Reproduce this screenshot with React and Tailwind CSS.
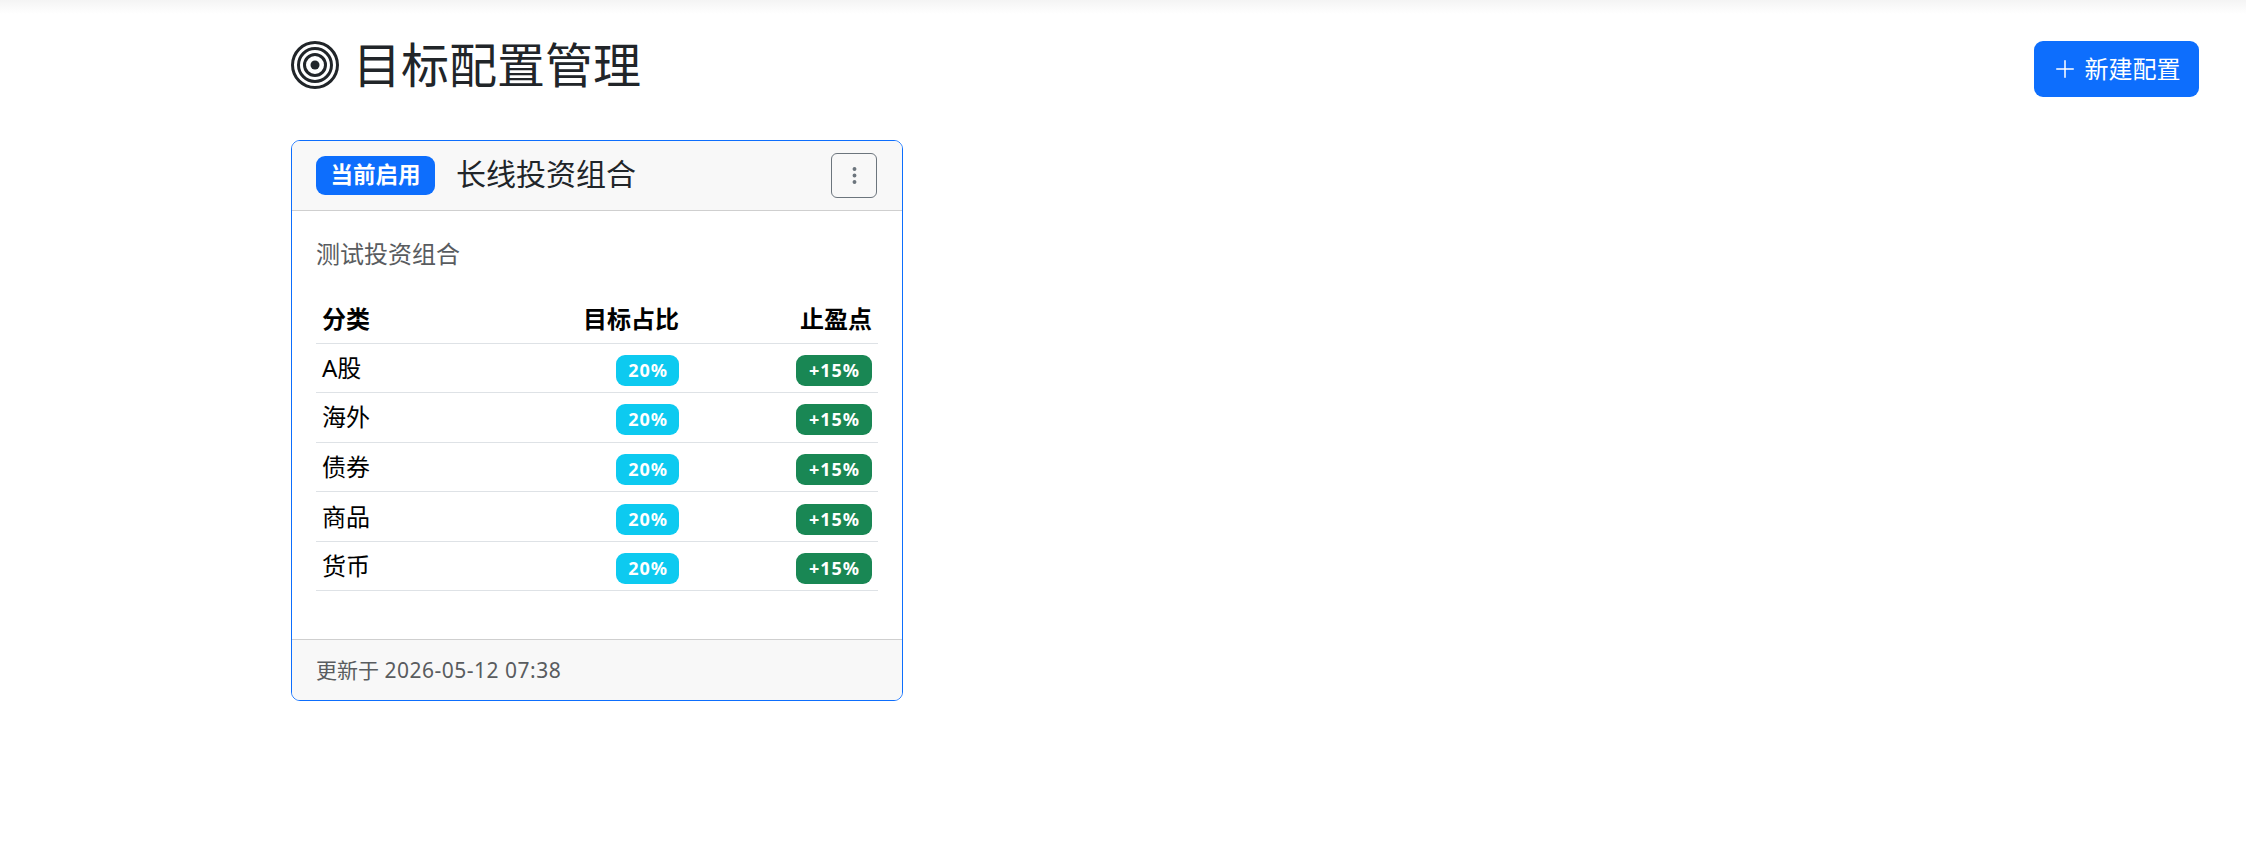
import { BsBullseye, BsPlusLg, BsThreeDotsVertical } from "react-icons/bs"

const rows = ["A股", "海外", "债券", "商品", "货币"]

export default function App() {
    return (
        <div className="min-h-[858px] bg-white text-[#212529] font-['Noto_Sans','Noto_Sans_CJK_SC',sans-serif]">
            {/* navbar shadow */}
            <div className="h-[14px] bg-gradient-to-b from-[#f4f4f4] to-white"></div>

            <div className="pl-[291px] pr-[47px]">
                <div className="flex justify-between items-start mb-[43px]">
                    <h2 className="flex items-center gap-[14px] text-[48px] leading-[58px] mt-[22px]">
                        <BsBullseye size={48} />
                        <span>目标配置管理</span>
                    </h2>
                    <button type="button" className="flex items-center justify-center gap-[8px] w-[165px] h-[56px] mt-[27px] bg-[#0d6efd] text-white text-[24px] rounded-[9px]">
                        <BsPlusLg size={24} />
                        <span>新建配置</span>
                    </button>
                </div>

                <div className="w-[612px] h-[561px] flex flex-col border border-[#0d6efd] rounded-[9px] overflow-hidden">
                    <div className="h-[70px] flex items-center justify-between pl-[24px] pr-[25px] pb-[1px] bg-[#f8f8f8] border-b border-[#cfcfcf]">
                        <div className="flex items-center gap-[21px]">
                            <span className="h-[39px] px-[14.5px] flex items-center bg-[#0d6efd] text-white text-[22.5px] font-bold rounded-[9px]">当前启用</span>
                            <h5 className="text-[30px] leading-[36px] -mt-[2px]">长线投资组合</h5>
                        </div>
                        <button type="button" className="w-[46px] h-[45px] flex items-center justify-center border border-[#6c757d] text-[#6c757d] rounded-[6px]">
                            <BsThreeDotsVertical size={21} />
                        </button>
                    </div>

                    <div className="flex-1 px-[24px] pt-[25px]">
                        <p className="text-[24px] leading-[36px] text-[#595c5f] mb-[24px]">测试投资组合</p>
                        <table className="w-full table-fixed text-black text-[24px] leading-[36px]">
                            <thead>
                                <tr className="border-b border-[#dee2e6]">
                                    <th className="w-[190px] h-[47px] px-[6px] text-left font-bold">分类</th>
                                    <th className="w-[179px] h-[47px] px-[6px] text-right font-bold">目标占比</th>
                                    <th className="w-[193px] h-[47px] px-[6px] text-right font-bold">止盈点</th>
                                </tr>
                            </thead>
                            <tbody>
                                {rows.map((name) => (
                                    <tr key={name} className="border-b border-[#dee2e6]">
                                        <td className="h-[49.6px] px-[6px]">{name}</td>
                                        <td className="h-[49.6px] px-[6px] text-right">
                                            <span className="inline-block align-middle h-[31px] pl-[12px] pr-[11px] leading-[30px] tracking-[1px] bg-[#0dcaf0] text-white text-[18px] font-bold rounded-[9px]">20%</span>
                                        </td>
                                        <td className="h-[49.6px] px-[6px] text-right">
                                            <span className="inline-block align-middle h-[31px] pl-[13px] pr-[12px] leading-[30px] tracking-[1px] bg-[#198754] text-white text-[18px] font-bold rounded-[9px]">+15%</span>
                                        </td>
                                    </tr>
                                ))}
                            </tbody>
                        </table>
                    </div>

                    <div className="h-[61px] flex items-center px-[24px] pt-[2px] bg-[#f8f8f8] border-t border-[#cfcfcf] text-[21px] text-[#595c5f]">
                        <span>更新于 <span className="tracking-[0.5px]">2026-05-12 07:38</span></span>
                    </div>
                </div>
            </div>
        </div>
    )
}
